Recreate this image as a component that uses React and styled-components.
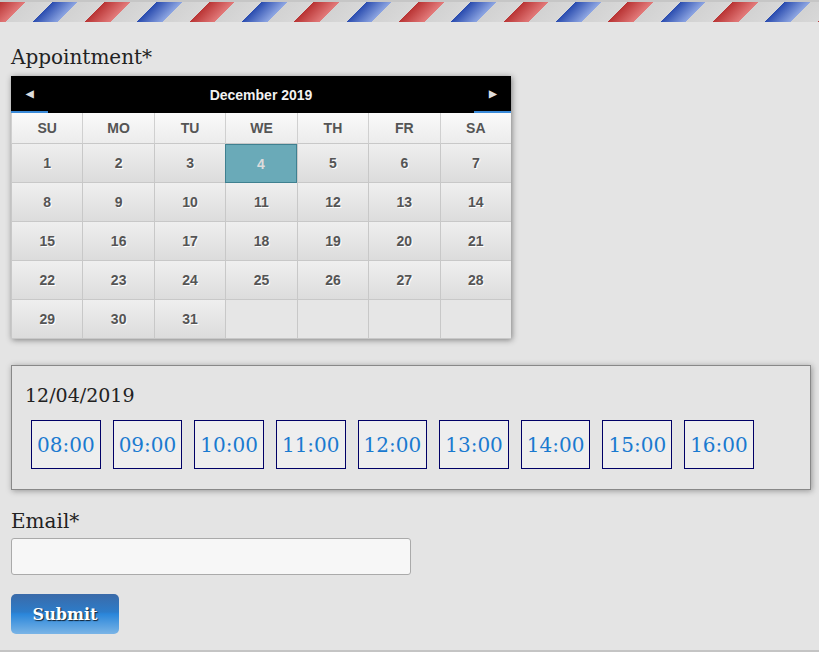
import React, {useState} from 'react';
import styled, {createGlobalStyle, css} from 'styled-components';

const GlobalStyle = createGlobalStyle`
    html, body {
        margin:0;
        padding:0;
        background:#e4e4e4;
    }
    body {
        font-family:"DejaVu Serif", "Liberation Serif", serif;
        color:#222;
    }
    * {
        box-sizing:border-box;
    }
`

const Page = styled.div`
    width:819px;
    height:652px;
    display:flex;
    flex-direction:column;
    border-bottom:2px solid #c4c4c4;
    overflow:hidden;
`

const Stripe = styled.div`
    height:22px;
    border-top:2px solid #c6c6c6;
    background:repeating-linear-gradient(
        135deg,
        #b93434 0px,
        #e27a7a 18px,
        #d2d2d2 18px,
        #d8d8d8 37px,
        #2a4caf 37px,
        #8ea6e2 55px,
        #d2d2d2 55px,
        #d8d8d8 74px
    );
`

const Form = styled.div`
    display:flex;
    flex-direction:column;
    align-items:flex-start;
    padding:20px 11px 0;
`

const Label = styled.label`
    font-size:20px;
    line-height:30px;
    color:#222;
    margin-top:${p => p.$top || 0}px;
    margin-bottom:${p => p.$gap || 4}px;
`

const Calendar = styled.div`
    width:500px;
    background:#e6e6e6;
    box-shadow:1px 1px 6px rgba(0,0,0,0.45);
    font-family:"Liberation Sans", Arial, sans-serif;
    font-weight:bold;
`

const CalHeader = styled.div`
    height:37px;
    background:#000;
    color:#f2f2f2;
    display:flex;
    align-items:center;
    justify-content:space-between;
    font-size:14px;
`

const NavBtn = styled.span`
    width:37px;
    height:37px;
    display:flex;
    align-items:center;
    justify-content:center;
    font-size:10px;
    color:#ddd;
    border-bottom:2px solid #3a8ad8;
`

const Grid = styled.div`
    display:grid;
    grid-template-columns:repeat(7, 1fr);
`

const DayName = styled.div`
    height:31px;
    display:flex;
    align-items:center;
    justify-content:center;
    font-size:14px;
    color:#555;
    background:linear-gradient(#fafafa, #ececec);
    border-left:1px solid #d0d0d0;
    border-bottom:1px solid #c8c8c8;
`

const Day = styled.div`
    height:39px;
    display:flex;
    align-items:center;
    justify-content:center;
    font-size:14px;
    color:#555;
    text-shadow:1px 1px 0 #fff;
    border-left:1px solid #c8c8c8;
    border-bottom:1px solid #c8c8c8;
    background:linear-gradient(#efefef, #dcdcdc);

    ${p => p.$empty && css`
        background:#e6e6e6;
    `}

    ${p => p.$active && css`
        background:#6aaab8;
        border:1px solid #3f8090;
        color:#dcdcdc;
        text-shadow:none;
    `}
`

const TimePanel = styled.div`
    width:800px;
    margin-top:26px;
    padding:16px 13px 20px;
    border:1px solid #888;
    box-shadow:1px 1px 6px rgba(0,0,0,0.35);
`

const DateText = styled.div`
    font-size:19px;
    line-height:26px;
    margin-bottom:12px;
`

const Slots = styled.div`
    display:flex;
    gap:12px;
    padding-left:6px;
`

const Slot = styled.button`
    height:49px;
    padding:0 5px;
    border:1px solid #000066;
    background:#eeeeee;
    color:#1a7ad0;
    font-family:"DejaVu Serif", serif;
    font-size:20px;
    cursor:pointer;
`

const EmailInput = styled.input`
    width:400px;
    height:37px;
    background:#f7f7f7;
    border:1px solid #aaa;
    border-radius:3px;
    margin-bottom:19px;
`

const Submit = styled.button`
    width:108px;
    height:40px;
    border:none;
    border-radius:5px;
    color:#fff;
    font-family:"DejaVu Serif", serif;
    font-weight:bold;
    font-size:16px;
    text-shadow:1px 1px 1px #123;
    background:linear-gradient(#3a6aa8 0%, #2d7cc9 45%, #2a86da 50%, #7ab4e6 100%);
`

const dayNames = ['SU', 'MO', 'TU', 'WE', 'TH', 'FR', 'SA'];
const times = ['08:00', '09:00', '10:00', '11:00', '12:00', '13:00', '14:00', '15:00', '16:00'];

const App = () => {
    const [selected] = useState(4);
    const days = [];
    for (let i = 1; i <= 35; i++) days.push(i <= 31 ? i : null);

    return (
        <Page>
            <GlobalStyle />
            <Stripe />
            <Form>
                <Label>Appointment*</Label>
                <Calendar>
                    <CalHeader>
                        <NavBtn>&#9664;</NavBtn>
                        <span>December 2019</span>
                        <NavBtn>&#9654;</NavBtn>
                    </CalHeader>
                    <Grid>
                        {dayNames.map(d => <DayName key={d}>{d}</DayName>)}
                        {days.map((d, i) => (
                            <Day key={i} $empty={!d} $active={d === selected}>{d}</Day>
                        ))}
                    </Grid>
                </Calendar>

                <TimePanel>
                    <DateText>12/04/2019</DateText>
                    <Slots>
                        {times.map(t => <Slot key={t}>{t}</Slot>)}
                    </Slots>
                </TimePanel>

                <Label $top={16} $gap={2}>Email*</Label>
                <EmailInput type="text" />
                <Submit>Submit</Submit>
            </Form>
        </Page>
    )
}

export default App;
